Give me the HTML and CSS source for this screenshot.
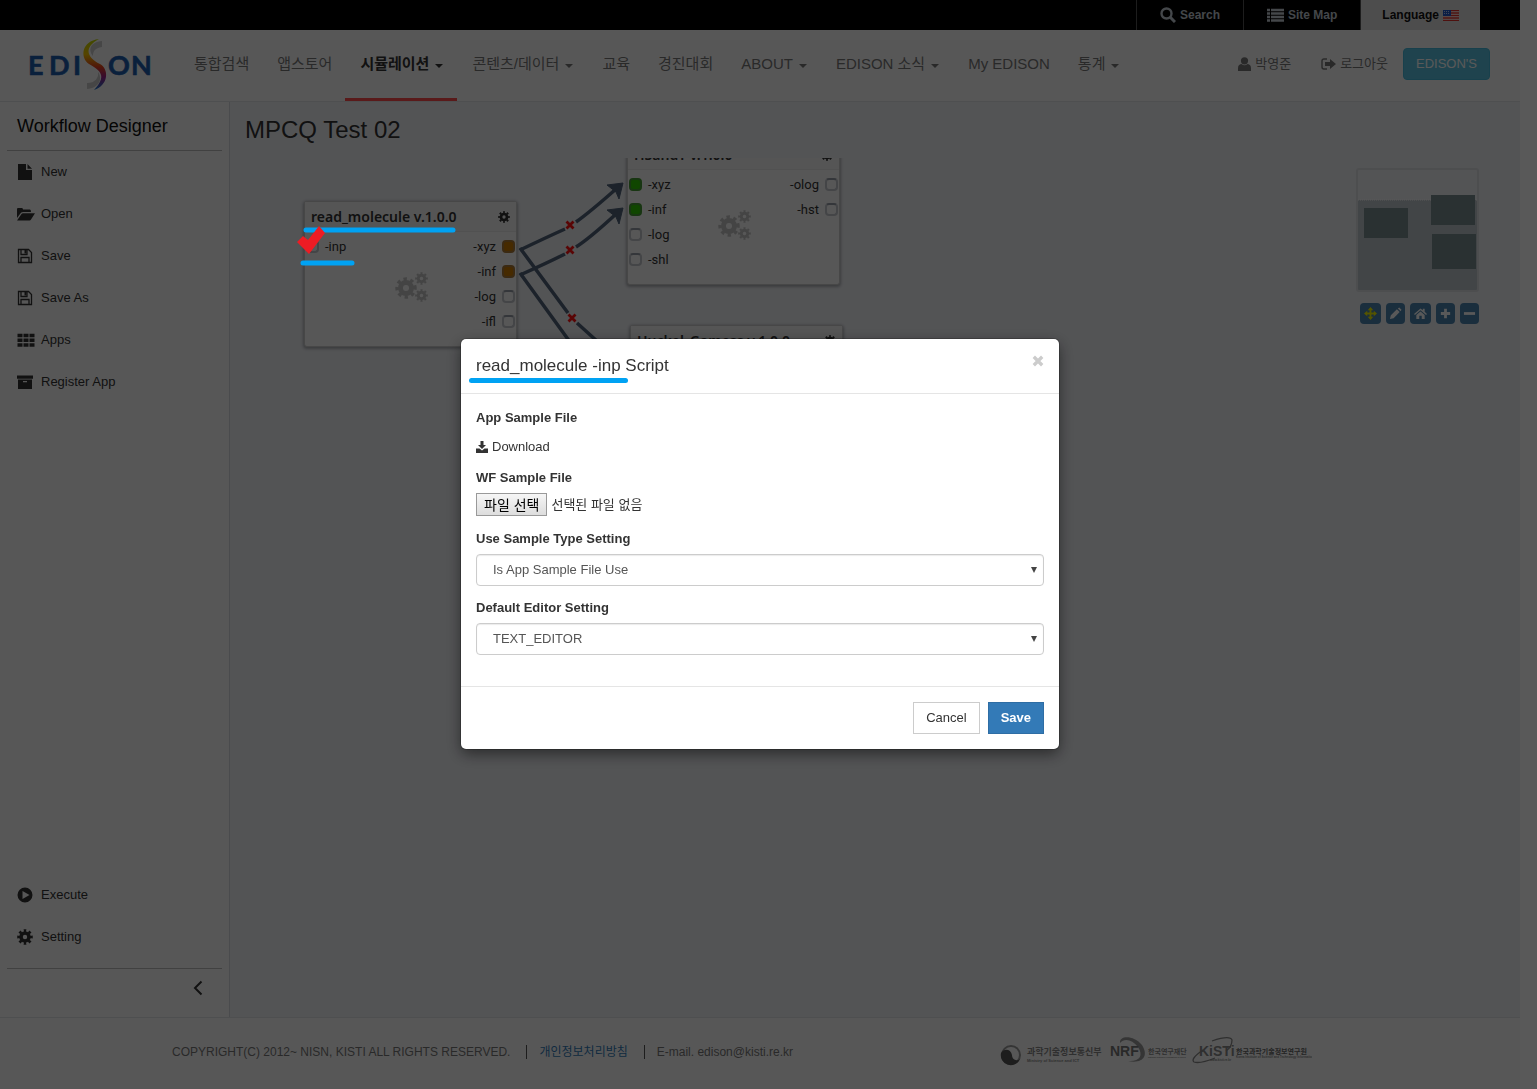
FILE: index.html
```html
<!DOCTYPE html>
<html lang="ko">
<head>
<meta charset="utf-8">
<title>EDISON Workflow Designer</title>
<link rel="stylesheet" href="styles.css">
</head>
<body>
<svg class="defs" aria-hidden="true">
  <defs>
    <linearGradient id="swoosh" x1="0" y1="0" x2="0" y2="1">
      <stop offset="0" stop-color="#b9d400"/><stop offset=".3" stop-color="#f5c400"/>
      <stop offset=".55" stop-color="#e6401c"/><stop offset=".75" stop-color="#9a1d8a"/><stop offset="1" stop-color="#1677c8"/>
    </linearGradient>
    <symbol id="gear" viewBox="0 0 16 16">
      <circle cx="8" cy="8" r="4" fill="none" stroke="currentColor" stroke-width="3.6"/>
      <circle cx="8" cy="8" r="6.4" fill="none" stroke="currentColor" stroke-width="2.8" pathLength="16" stroke-dasharray="1 1" stroke-dashoffset=".5"/>
    </symbol>
    <symbol id="gears" viewBox="0 0 34 32">
      <use href="#gear" x="0" y="5" width="22" height="22"/>
      <use href="#gear" x="20" y="0" width="13" height="13"/>
      <use href="#gear" x="20" y="17" width="13" height="13"/>
    </symbol>
    <symbol id="floppy" viewBox="0 0 16 16">
      <path d="M1.500 1.500H11.500L14.500 4.500V14.500H1.500ZM4 14V9.500H12V14M4 2V6.500H10V2" fill="none" stroke="currentColor" stroke-width="1.300"/>
      <path d="M7.500 2H9.500V5.500H7.500Z" fill="currentColor"/>
    </symbol>
    <symbol id="cross" viewBox="0 0 10 10"><path d="M1.500 1.500L8.500 8.500M8.500 1.500L1.500 8.500" stroke="currentColor" stroke-width="2.800"/></symbol>
  </defs>
</svg>

<div class="page">
  <div class="topbar">
    <a class="top-link" href="#"><svg width="16" height="16" viewBox="0 0 16 16"><circle cx="6.500" cy="6.500" r="5" fill="none" stroke="currentColor" stroke-width="2.400"/><path d="M10 10L15 15" stroke="currentColor" stroke-width="3"/></svg>Search</a>
    <a class="top-link" href="#"><svg width="17" height="14" viewBox="0 0 17 14"><path d="M0 2H3M0 5.500H3M0 9H3M0 12.500H3M4 2H17M4 5.500H17M4 9H17M4 12.500H17" stroke="currentColor" stroke-width="2.400"/></svg>Site Map</a>
    <a class="top-link language" href="#">Language<svg width="16" height="11" viewBox="0 0 16 11"><path fill="#fff" d="M0 0H16V11H0Z"/><path d="M0 .5H16M0 3H16M0 5.500H16M0 8H16M0 10.500H16" stroke="#e0332c" stroke-width="1.300"/><path fill="#2458c8" d="M0 0H8V6H0Z"/><path d="M1 1.500H7M1 3.500H7" stroke="#fff" stroke-width=".7" stroke-dasharray="1 1"/></svg></a>
  </div>

  <header class="header">
    <a class="brand" href="#" aria-label="EDISON">
      <svg width="124" height="54" viewBox="0 0 124 54">
        <g class="brand-text"><text x="-1" y="37">E</text><text x="20" y="37">D</text><text x="44" y="37">I</text><text x="79" y="37">O</text><text x="102" y="37">N</text></g>
        <path d="M73 3V9C66 10 64 13 64 18C59 12 61 4 73 3Z" fill="#c8c8c8"/>
        <path d="M70 1C52 3 51 20 60 26C72 33 78 38 65 52C80 47 80 31 71 26C57 19 55 9 70 1Z" fill="url(#swoosh)"/>
        <path d="M58 45C66 45 70 40 69 34C74 41 70 50 58 51Z" fill="#c8c8c8"/>
      </svg>
    </a>
    <nav class="nav">
      <a href="#">통합검색</a>
      <a href="#">앱스토어</a>
      <a href="#" class="active caret">시뮬레이션</a>
      <a href="#" class="caret">콘텐츠/데이터</a>
      <a href="#">교육</a>
      <a href="#">경진대회</a>
      <a href="#" class="caret">ABOUT</a>
      <a href="#" class="caret">EDISON 소식</a>
      <a href="#">My EDISON</a>
      <a href="#" class="caret">통계</a>
    </nav>
    <div class="account">
      <a href="#"><svg width="13" height="14" viewBox="0 0 13 14"><circle cx="6.500" cy="3.800" r="3.600" fill="currentColor"/><path d="M0 14V11C0 8 2 7 3.500 7Q6.500 9.500 9.500 7C11 7 13 8 13 11V14Z" fill="currentColor"/></svg>박영준</a>
      <a href="#"><svg width="15" height="12" viewBox="0 0 15 12"><path d="M6 1H3Q1 1 1 3V9Q1 11 3 11H6" fill="none" stroke="currentColor" stroke-width="1.400"/><path d="M4 4H9V1L15 6L9 11V8H4Z" fill="currentColor"/></svg>로그아웃</a>
      <button type="button" class="site-button">EDISON'S</button>
    </div>
  </header>

  <div class="workspace">
    <aside class="sidebar">
      <h2>Workflow Designer</h2>
      <nav class="menu">
        <a href="#"><svg viewBox="0 0 16 16"><path d="M1 0H9V6H15V16H1ZM10.500 0L15 4.800H10.500Z" fill="currentColor"/></svg>New</a>
        <a href="#"><svg class="wide" viewBox="0 0 18 16"><path d="M0 12V3Q0 2 1 2H5Q6 2 6 3.500H13Q14 3.500 14 6H6Q4 6 3 8Z M0 14.500L4.500 8Q5 7.200 6 7.200H18L14 13.500Q13.500 14.500 12.500 14.500Z" fill="currentColor"/></svg>Open</a>
        <a href="#"><svg viewBox="0 0 16 16"><use href="#floppy"/></svg>Save</a>
        <a href="#"><svg viewBox="0 0 16 16"><use href="#floppy"/></svg>Save As</a>
        <a href="#"><svg class="wide" viewBox="0 0 17 16"><path d="M0 3.500H17M0 8.200H17M0 13H17" stroke="currentColor" stroke-width="3.600" stroke-dasharray="5 1"/></svg>Apps</a>
        <a href="#"><svg viewBox="0 0 16 16"><path d="M0 1.500H16V4.800H0ZM1 5.600H15V15H1ZM6 7V8.200H10V7Z" fill="currentColor" fill-rule="evenodd"/></svg>Register App</a>
      </nav>
      <nav class="menu menu-bottom">
        <a href="#"><svg viewBox="0 0 16 16"><path d="M8 .5A7.500 7.500 0 1 0 8 15.500A7.500 7.500 0 1 0 8 .5ZM5.500 4L12.500 8L5.500 12Z" fill="currentColor" fill-rule="evenodd"/></svg>Execute</a>
        <a href="#"><svg viewBox="0 0 16 16"><use href="#gear"/></svg>Setting</a>
      </nav>
      <button type="button" class="collapse" aria-label="Collapse"><svg width="10" height="16" viewBox="0 0 10 16"><path d="M8.500 1.500L2 8L8.500 14.500" fill="none" stroke="currentColor" stroke-width="2"/></svg></button>
    </aside>

    <main class="designer">
      <h1>MPCQ Test 02</h1>
      <div class="canvas">
        <section class="node node-read">
          <header><h3>read_molecule v.1.0.0</h3><svg width="12" height="12"><use href="#gear"/></svg></header>
          <div class="ports">
            <ul><li><i></i>-inp</li></ul>
            <ul class="out"><li><i class="used"></i>-xyz</li><li><i class="used"></i>-inf</li><li><i></i>-log</li><li><i></i>-ifl</li></ul>
          </div>
          <svg class="emblem" width="34" height="32"><use href="#gears"/></svg>
        </section>
        <section class="node node-band">
          <header><h3>HSandT v.1.0.0</h3><svg width="12" height="12"><use href="#gear"/></svg></header>
          <div class="ports">
            <ul><li><i class="linked"></i>-xyz</li><li><i class="linked"></i>-inf</li><li><i></i>-log</li><li><i></i>-shl</li></ul>
            <ul class="out"><li><i></i>-olog</li><li><i></i>-hst</li></ul>
          </div>
          <svg class="emblem" width="34" height="32"><use href="#gears"/></svg>
        </section>
        <section class="node node-huckel">
          <header><h3>Huckel_Gamess v.1.0.0</h3><svg width="12" height="12"><use href="#gear"/></svg></header>
        </section>
        <svg class="links" width="400" height="300" viewBox="0 0 400 300">
          <g fill="none" stroke="#50637a" stroke-width="3.500">
            <path d="M290 92Q315 80 335 71M346 64Q360 54 386 31"/>
            <path d="M290 117Q315 106 335 96M346 89Q360 80 386 56"/>
            <path d="M290 90L338 155M347 165L368 184M290 115L340 184"/>
          </g>
          <path d="M393 25L389 41L386 34L377 27ZM393 50L389 66L386 59L377 52Z" fill="#50637a" stroke="#50637a"/>
          <g color="#ff1010"><use href="#cross" x="335" y="62" width="10" height="10"/><use href="#cross" x="335" y="87" width="10" height="10"/><use href="#cross" x="337" y="155" width="10" height="10"/></g>
        </svg>
        <div class="map-panel">
          <svg class="minimap" viewBox="0 0 123 124">
            <path d="M2 32H121V122H2Z" fill="#bdc5ca"/><path d="M2 32H121" stroke="#fff" stroke-dasharray="1 1"/>
            <path d="M8 40H52V70H8ZM75 27H119V57H75ZM76 66H120V101H76Z" fill="#788c91"/>
            <rect x="1" y="1" width="121" height="122" rx="2" fill="none" stroke="#dcdfe2" stroke-width="2"/>
          </svg>
          <div class="tools">
            <button type="button" class="move" aria-label="Move"><svg viewBox="0 0 14 14"><path d="M7 2V12M2 7H12" stroke="currentColor" stroke-width="2"/><path d="M7 0L10 3.500H4ZM7 14L4 10.500H10ZM0 7L3.500 4V10ZM14 7L10.500 10V4Z" fill="currentColor"/></svg></button>
            <button type="button" class="narrow" aria-label="Edit"><svg viewBox="0 0 14 14"><path d="M1 13L2 9L8.500 2.500L11.500 5.500L5 12ZM9.500 1.500L11 .5L13.500 3L12.500 4.500Z" fill="currentColor"/></svg></button>
            <button type="button" aria-label="Home"><svg viewBox="0 0 14 14"><path d="M0 7.500L7 1.500L9.500 3.500V2H11.500V5.200L14 7.500L13 8.500L7 3.500L1 8.500ZM2.500 8.500L7 4.800L11.500 8.500V13H8.300V9.500H5.700V13H2.500Z" fill="currentColor"/></svg></button>
            <button type="button" class="narrow" aria-label="Zoom in"><svg viewBox="0 0 14 14"><path d="M7 2V12M2 7H12" stroke="currentColor" stroke-width="3"/></svg></button>
            <button type="button" class="narrow" aria-label="Zoom out"><svg viewBox="0 0 14 14"><path d="M1 7H13" stroke="currentColor" stroke-width="3"/></svg></button>
          </div>
        </div>
      </div>
    </main>
  </div>

  <footer class="footer">
    <p>COPYRIGHT(C) 2012~ NISN, KISTI ALL RIGHTS RESERVED.</p>
    <a href="#">개인정보처리방침</a>
    <p>E-mail. edison@kisti.re.kr</p>
    <svg class="partners" width="312" height="34" viewBox="0 0 312 34">
      <circle cx="11" cy="20" r="9" fill="none" stroke="#999" stroke-width="2"/><path d="M1 18A10 10 0 0 0 20 24C16 27 12 24 12 20C11 14 4 13 1 18Z" fill="#555"/>
      <g fill="#888"><text x="27" y="20" font-size="9" font-weight="700">과학기술정보통신부</text><text x="27" y="27" font-size="4" font-weight="700">Ministry of Science and ICT</text></g>
      <path d="M120 8C119 0 134 0 142 10C149 21 143 29 128 26C139 27 144 21 138 12C132 4 124 3 120 8Z" fill="#999"/>
      <g fill="#888" font-weight="700"><text x="110" y="21" font-size="14" fill="#777">NRF</text><text x="148" y="19" font-size="7">한국연구재단</text><text x="148" y="23" font-size="2">National Research Foundation of Korea</text></g>
      <path d="M212 6Q230 0 232 5Q232 12 226 16M203 15Q190 24 194 27Q200 29 215 23" fill="none" stroke="#888" stroke-width="1.300"/>
      <g fill="#888" font-weight="700"><text x="199" y="21" font-size="14">KiSTi</text><text x="210" y="26" font-size="3">www.kisti.re.kr</text><text x="236" y="19" font-size="7" fill="#666">한국과학기술정보연구원</text><text x="236" y="23" font-size="3">Korea Institute of Science and Technology Information</text></g>
    </svg>
  </footer>
</div>

<div class="backdrop">
  <div class="modal" role="dialog" aria-modal="true" aria-labelledby="modal-title">
    <div class="modal-header">
      <h4 id="modal-title"><span class="marked">read_molecule -inp</span> Script</h4>
      <button type="button" class="close" aria-label="Close"><svg width="12" height="12"><use href="#cross"/></svg></button>
    </div>
    <form class="modal-body">
      <div class="field">
        <strong>App Sample File</strong>
        <a class="download" href="#"><svg width="12" height="12" viewBox="0 0 12 12"><path d="M4.500 0H7.500V4H10L6 8L2 4H4.500ZM0 7.500H3.500L6 9.500L8.500 7.500H12V12H0Z" fill="currentColor"/></svg>Download</a>
      </div>
      <div class="field">
        <label for="wf-file">WF Sample File</label>
        <div class="file"><input id="wf-file" type="file" class="file-input" tabindex="-1"><button type="button">파일 선택</button><span>선택된 파일 없음</span></div>
      </div>
      <div class="field">
        <label for="sample-type">Use Sample Type Setting</label>
        <div class="select"><select id="sample-type"><option>Is App Sample File Use</option></select></div>
      </div>
      <div class="field">
        <label for="editor">Default Editor Setting</label>
        <div class="select"><select id="editor"><option>TEXT_EDITOR</option></select></div>
      </div>
    </form>
    <div class="modal-footer">
      <button type="button">Cancel</button>
      <button type="button" class="primary">Save</button>
    </div>
  </div>
</div>

<svg class="marks" width="160" height="42" viewBox="0 0 160 42" aria-hidden="true">
  <path d="M8 5H155M5 38H54" stroke="#00a2f3" stroke-width="5" stroke-linecap="round"/>
  <path d="M-1 17L5 11L10 15L21 1L27 8L11 29Z" fill="#ed1c24"/>
</svg>
</body>
</html>
```
FILE: styles.css
```css
* { box-sizing: border-box; }
body {
  margin: 0;
  background: #fff;
  color: #333;
  font: 13px/18px "Liberation Sans", "Noto Sans CJK KR", sans-serif;
}
h1, h2, h3, h4, p, ul { margin: 0; padding: 0; font-weight: 400; }
a { color: inherit; text-decoration: none; }
button, select { font: inherit; color: inherit; }
.defs { position: absolute; width: 0; height: 0; }

.page {
  display: flex;
  flex-direction: column;
  min-height: 100vh;
  margin-right: 17px;
  background: #fafafa;
}

/* top bar */
.topbar {
  display: flex;
  justify-content: flex-end;
  height: 30px;
  padding-right: 40px;
  background: #000;
}
.top-link {
  display: flex;
  align-items: center;
  gap: 4px;
  padding: 0 23px;
  border-left: 1px solid #555;
  color: #c2cad4;
  font-size: 12px;
  font-weight: 700;
}
.language { padding: 0 21px; background: #dcdcdc; color: #111; }

/* header */
.header {
  display: flex;
  height: 72px;
  padding: 0 30px 0 29px;
  border-bottom: 1px solid #dfe2e6;
}
.brand { width: 150px; padding-top: 8px; }
.brand-text {
  fill: #1f5dac;
  stroke: #1f5dac;
  stroke-width: .6px;
  font: 700 27px Lato, sans-serif;
}
.nav { display: flex; flex: 1; font-size: 15px; color: #777; }
.nav a {
  display: flex;
  align-items: center;
  height: 71px;
  padding: 0 13px 0 15px;
  border-bottom: 3px solid transparent;
  white-space: nowrap;
}
.nav .active { color: #333; font-weight: 700; border-color: #ff4c4c; }
.caret::after {
  content: "";
  margin: 3px 1px 0 6px;
  border: 4px solid transparent;
  border-top-color: currentColor;
  border-bottom: 0;
}
.account { display: flex; align-items: center; gap: 30px; padding-bottom: 4px; color: #777; }
.account a { display: flex; align-items: center; gap: 4px; }
.site-button {
  height: 32px;
  margin-left: -15px;
  padding: 0 12px;
  border: 1px solid #46b8da;
  border-radius: 4px;
  background: #5bc0de;
  color: #fff;
}

/* sidebar */
.workspace { display: flex; flex: 1; }
.sidebar {
  display: flex;
  flex-direction: column;
  width: 230px;
  padding: 0 7px;
  border-right: 1px solid #d4d7dc;
}
.sidebar h2 {
  padding: 12px 10px;
  border-bottom: 1px solid #bbb;
  color: #111;
  font-size: 18px;
  line-height: 24px;
}
.menu a { display: flex; align-items: center; gap: 8px; height: 42px; padding-left: 10px; }
.menu svg { width: 16px; height: 16px; color: #333; }
.menu .wide { width: 18px; margin-right: -2px; }
.menu-bottom { margin-top: auto; padding-bottom: 10px; border-bottom: 1px solid #bbb; }
.collapse {
  align-self: flex-end;
  height: 48px;
  margin-right: 12px;
  padding: 0 7px 6px;
  border: 0;
  background: none;
}

/* designer */
.designer { flex: 1; display: flex; flex-direction: column; min-width: 0; background: #eef0f4; }
.designer h1 { padding: 14px 15px; font-size: 24px; line-height: 28px; }
.canvas { position: relative; flex: 1; overflow: hidden; }
.node {
  position: absolute;
  width: 213px;
  height: 146px;
  border: 1px solid #ccc;
  border-radius: 3px;
  background: #fafafa;
  box-shadow: 0 1px 3px 1px #aaadb2;
  font-family: Roboto, sans-serif;
}
.node-read { left: 74px; top: 43px; }
.node-band { left: 397px; top: -19px; }
.node-huckel { left: 400px; top: 167px; }
.node header {
  display: flex;
  align-items: center;
  justify-content: space-between;
  height: 30px;
  padding: 0 6px;
  border-bottom: 1px solid #e8e8e8;
  background: #f4f4f4;
}
.node h3 { font: 600 14px/18px "Noto Sans", sans-serif; }
.ports { display: flex; justify-content: space-between; padding: 2px 1px; }
.ports ul { list-style: none; }
.ports li { display: flex; align-items: center; gap: 6px; height: 25px; }
.ports .out li { flex-direction: row-reverse; }
.ports i {
  width: 13px;
  height: 13px;
  border: 2px solid #c3c6cc;
  border-top-color: #969ca5;
  border-radius: 4px;
}
.ports .used { background: #c87800; border-color: #a87838; }
.ports .linked { background: #2fc800; border-color: #479a34; }
.emblem { position: absolute; left: 90px; top: 70px; color: #c4c4c4; }
.links { position: absolute; left: 0; top: 0; }
.map-panel { position: absolute; right: 41px; top: 10px; width: 123px; }
.minimap { display: block; width: 100%; }
.tools { display: flex; gap: 5px; margin: 11px 0 0 4px; }
.tools button {
  display: flex;
  align-items: center;
  justify-content: center;
  width: 21px;
  height: 21px;
  padding: 0;
  border: 0;
  border-radius: 4px;
  background: #4a83ae;
  color: #fff;
}
.tools .narrow { width: 19px; }
.tools .move { color: #f0f000; }
.tools svg { width: 13px; height: 13px; flex: none; }

/* footer */
.footer {
  display: flex;
  align-items: center;
  height: 72px;
  padding: 0 208px 4px 172px;
  border-top: 1px solid #dfe2e6;
  color: #777;
  font-size: 12px;
}
.footer a, .footer a + p { margin-left: 16px; padding-left: 12px; border-left: 1px solid #555; line-height: 14px; }
.footer a { color: #337ab7; }
.partners { margin-left: auto; font-family: "Liberation Sans", "Noto Sans CJK KR", sans-serif; }

/* dialog */
.backdrop {
  position: fixed;
  inset: 0;
  display: flex;
  align-items: center;
  justify-content: center;
  padding: 0 17px 1px 0;
  background: rgba(0, 0, 0, .65);
}
.modal {
  width: 598px;
  border-radius: 5px;
  background: #fff;
  box-shadow: 0 5px 15px rgba(0, 0, 0, .5), 0 0 0 1px rgba(0, 0, 0, .2);
}
.modal-header {
  display: flex;
  justify-content: space-between;
  align-items: flex-start;
  padding: 15px;
  border-bottom: 1px solid #e5e5e5;
}
.modal-header h4 { font-size: 17px; line-height: 24px; }
.marked { position: relative; }
.marked::after {
  content: "";
  position: absolute;
  left: -7px;
  right: -7px;
  bottom: -8px;
  height: 5px;
  border-radius: 3px;
  background: #00a2f3;
}
.close { display: flex; padding: 1px 0; border: 0; background: none; color: #ccc; }
.modal-body { display: grid; gap: 13px; padding: 15px 15px 31px; }
.field { display: grid; gap: 6px; }
.field label, .field strong { font-weight: 700; }
.download { display: flex; align-items: center; gap: 4px; padding-top: 5px; }
.file { position: relative; display: flex; align-items: flex-start; gap: 4px; height: 24px; line-height: 24px; }
.file-input { position: absolute; width: 1px; height: 1px; opacity: 0; }
.file button {
  height: 23px;
  padding: 0 7px;
  border: 1px solid #999;
  background: linear-gradient(#f6f6f6, #ddd);
  color: #000;
  font-size: 14px;
  line-height: 20px;
}
.select { position: relative; }
.select select {
  display: block;
  width: 100%;
  height: 32px;
  padding: 0 16px;
  border: 1px solid #ccc;
  border-radius: 4px;
  background: #fff;
  box-shadow: inset 0 1px 1px rgba(0, 0, 0, .08);
  color: #555;
  appearance: none;
}
.select::after {
  content: "";
  position: absolute;
  right: 7px;
  top: 13px;
  border: 3px solid transparent;
  border-top: 6px solid #444;
  border-bottom: 0;
}
.modal-footer {
  display: flex;
  justify-content: flex-end;
  gap: 8px;
  padding: 15px;
  border-top: 1px solid #e5e5e5;
}
.modal-footer button { height: 32px; padding: 0 12px; border: 1px solid #ccc; background: #fff; }
.modal-footer .primary { border-color: #2e6da4; background: #337ab7; color: #fff; font-weight: 700; }

/* highlighter strokes over the canvas */
.marks { position: absolute; left: 298px; top: 225px; overflow: visible; }
```
